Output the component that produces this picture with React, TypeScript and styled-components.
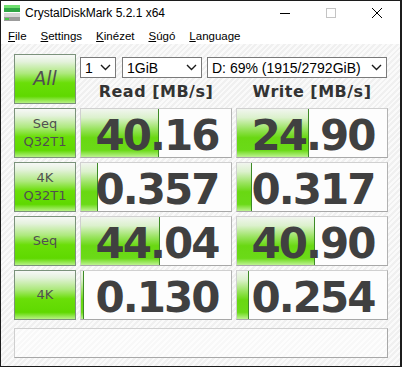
import { Fragment } from "react"
import styled, { createGlobalStyle } from "styled-components"

const GlobalStyle = createGlobalStyle`
  html, body {
    margin: 0;
    padding: 0;
    background: #1e1e1e;
  }
  * {
    box-sizing: border-box;
  }
`

const Window = styled.div`
  width: 402px;
  height: 367px;
  display: flex;
  flex-direction: column;
  border: 1px solid #1c1c1c;
  border-right-width: 2px;
  background: repeating-linear-gradient(135deg, #fafafa 0 2px, #f0f0f0 2px 4px);
  font-family: "Liberation Sans", Arial, sans-serif;
  overflow: hidden;
`

const TitleBar = styled.div`
  flex: none;
  height: 26px;
  padding-bottom: 2px;
  display: flex;
  align-items: center;
  background: #fff;
`

const AppIcon = styled.svg`
  margin-left: 3px;
  flex: none;
`

const TitleText = styled.div`
  margin-left: 5px;
  flex: 1;
  font-size: 12px;
  color: #000;
`

const CaptionButton = styled.div`
  width: 46px;
  height: 100%;
  display: flex;
  align-items: center;
  justify-content: center;
`

const MenuBar = styled.div`
  flex: none;
  height: 17px;
  display: flex;
  align-items: center;
  background: #fff;
`

const MenuItem = styled.div`
  padding: 0 7px;
  font-size: 11.5px;
  color: #000;
`

const Content = styled.div`
  flex: 1;
  padding: 10px 0 0 13px;
`

const Grid = styled.div`
  display: grid;
  grid-template-columns: 62px 152px 152px;
  grid-template-rows: repeat(5, 50px) 34px;
  gap: 4px;
`

const TestButton = styled.div<{ $big?: boolean }>`
  display: flex;
  flex-direction: column;
  align-items: center;
  justify-content: center;
  border: 1px solid #7b927b;
  background: linear-gradient(
    #f7f8f7 0%,
    #e4f2dc 14%,
    #aee97e 38%,
    #6ade08 58%,
    #5fd900 86%,
    #b6f184 100%
  );
  color: #505050;
  font-family: "DejaVu Sans", sans-serif;
  font-size: ${(p) => (p.$big ? "19px" : "13px")};
  font-style: ${(p) => (p.$big ? "italic" : "normal")};
  line-height: 1.35;
`

const TopControls = styled.div`
  grid-column: 2 / span 2;
  display: flex;
  flex-direction: column;
`

const SelectRow = styled.div`
  margin-top: 3px;
  display: flex;
  height: 21px;
`

const Select = styled.div<{ $w: number; $gap: number }>`
  width: ${(p) => p.$w}px;
  margin-left: ${(p) => p.$gap}px;
  display: flex;
  align-items: center;
  justify-content: space-between;
  padding: 0 4px;
  border: 1px solid #7a7a7a;
  background: #fff;
  font-size: 14px;
  color: #000;
`

const HeaderRow = styled.div`
  flex: 1;
  display: grid;
  grid-template-columns: 152px 152px;
  gap: 4px;
  align-items: center;
`

const Header = styled.div`
  text-align: center;
  font-family: "DejaVu Sans", sans-serif;
  font-weight: bold;
  font-size: 16px;
  letter-spacing: 0.5px;
  color: #333;
`

const ValueCell = styled.div`
  position: relative;
  border: 1px solid #d0d0d0;
  border-right-color: #b2b2b2;
  border-bottom-color: #a8a8a8;
  background: #fdfdfd;
  overflow: hidden;
`

const Bar = styled.div`
  position: absolute;
  left: 0;
  top: 0;
  bottom: 0;
  border-right: 1px solid #3d8a26;
  background: linear-gradient(
    #f1f5ef 0%,
    #dcf1cd 18%,
    #98e35d 42%,
    #69d812 60%,
    #6bda18 86%,
    #bdf291 100%
  );
`

const Value = styled.div`
  position: relative;
  height: 100%;
  display: flex;
  align-items: center;
  justify-content: center;
  padding-top: 4px;
  padding-left: 2px;
  font-family: "DejaVu Sans", sans-serif;
  font-weight: bold;
  font-size: 42px;
  letter-spacing: -2px;
  color: #404040;
`

const StatusBox = styled.div`
  grid-column: 1 / span 3;
  margin-top: 4px;
  height: 30px;
  border: 1px solid #cfcfcf;
  border-right-color: #a8a8a8;
  border-bottom-color: #a8a8a8;
  background: rgba(255, 255, 255, 0.55);
`

const Chevron = () => (
  <svg width="11" height="7" viewBox="0 0 11 7">
    <polyline points="1,1 5.5,5.5 10,1" fill="none" stroke="#1a1a1a" strokeWidth="1.4" />
  </svg>
)

const rows = [
  { label: ["Seq", "Q32T1"], read: "40.16", write: "24.90" },
  { label: ["4K", "Q32T1"], read: "0.357", write: "0.317" },
  { label: ["Seq"], read: "44.04", write: "40.90" },
  { label: ["4K"], read: "0.130", write: "0.254" },
]

// CrystalDiskMark meter is logarithmic: full width at 10000 MB/s
const barWidth = (v: string) => Math.max(0, Math.round(30 * Math.log10(parseFloat(v) * 10)))

const Meter = ({ value }: { value: string }) => (
  <ValueCell>
    <Bar style={{ width: barWidth(value) }} />
    <Value>{value}</Value>
  </ValueCell>
)

const App = () => {
  return (
    <>
      <GlobalStyle />
      <Window>
        <TitleBar>
          <AppIcon width="16" height="16" viewBox="0 0 16 16">
            <rect x="0" y="0" width="16" height="3" fill="#6fdf6f" />
            <rect x="0" y="3" width="16" height="4" fill="#2fa544" />
            <rect x="0" y="8" width="16" height="4" fill="#d6d6d6" />
            <rect x="0" y="12" width="16" height="4" fill="#9c9c9c" />
            <rect x="1" y="13" width="4" height="2" fill="#45c845" />
          </AppIcon>
          <TitleText>CrystalDiskMark 5.2.1 x64</TitleText>
          <CaptionButton>
            <svg width="10" height="10" viewBox="0 0 10 10">
              <line x1="0" y1="5.5" x2="10" y2="5.5" stroke="#000" strokeWidth="1" />
            </svg>
          </CaptionButton>
          <CaptionButton>
            <svg width="10" height="10" viewBox="0 0 10 10">
              <rect x="0.5" y="0.5" width="9" height="9" fill="none" stroke="#c4c4c4" strokeWidth="1" />
            </svg>
          </CaptionButton>
          <CaptionButton>
            <svg width="10" height="10" viewBox="0 0 10 10">
              <path d="M0 0 L10 10 M10 0 L0 10" stroke="#000" strokeWidth="1" />
            </svg>
          </CaptionButton>
        </TitleBar>
        <MenuBar>
          <MenuItem><u>F</u>ile</MenuItem>
          <MenuItem><u>S</u>ettings</MenuItem>
          <MenuItem><u>K</u>inézet</MenuItem>
          <MenuItem><u>S</u>úgó</MenuItem>
          <MenuItem><u>L</u>anguage</MenuItem>
        </MenuBar>
        <Content>
          <Grid>
            <TestButton $big>All</TestButton>
            <TopControls>
              <SelectRow>
                <Select $w={36} $gap={0}>1<Chevron /></Select>
                <Select $w={80} $gap={6}>1GiB<Chevron /></Select>
                <Select $w={180} $gap={5}>D: 69% (1915/2792GiB)<Chevron /></Select>
              </SelectRow>
              <HeaderRow>
                <Header>Read [MB/s]</Header>
                <Header>Write [MB/s]</Header>
              </HeaderRow>
            </TopControls>
            {rows.map((r) => (
              <Fragment key={r.label.join() + r.read}>
                <TestButton>
                  {r.label.map((l) => (
                    <span key={l}>{l}</span>
                  ))}
                </TestButton>
                <Meter value={r.read} />
                <Meter value={r.write} />
              </Fragment>
            ))}
            <StatusBox />
          </Grid>
        </Content>
      </Window>
    </>
  )
}

export default App
